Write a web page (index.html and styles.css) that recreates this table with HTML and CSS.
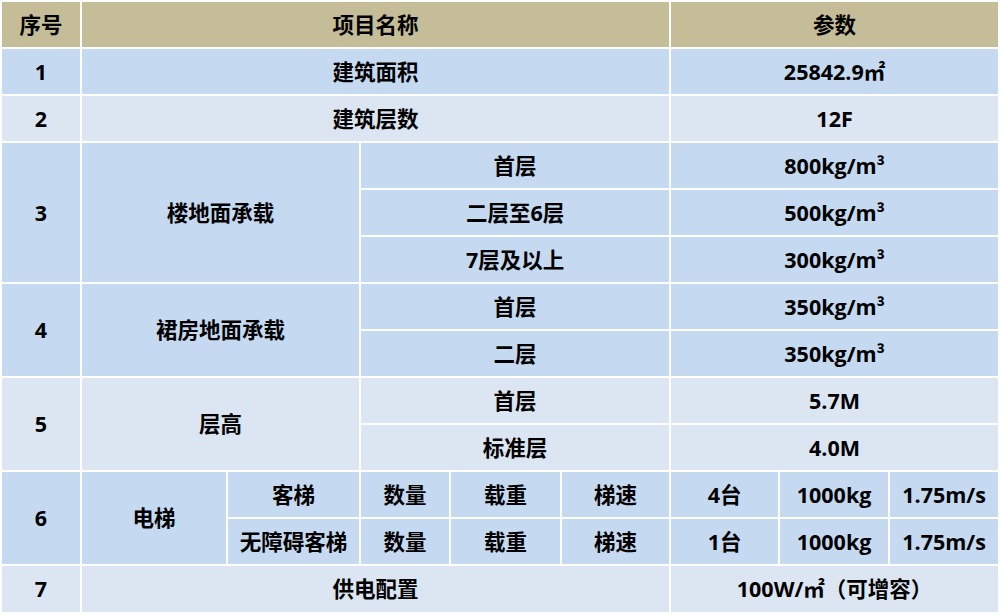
FILE: index.html
```html
<!DOCTYPE html>
<html lang="zh">
<head>
<meta charset="utf-8">
<link rel="stylesheet" href="styles.css">
</head>
<body>
<table class="spec">
  <colgroup>
    <col class="c1"><col class="c2"><col class="c3"><col class="c4"><col class="c5"><col class="c6"><col class="c7"><col class="c8"><col class="c9">
  </colgroup>
  <tr class="head">
    <td>序号</td>
    <td colspan="5">项目名称</td>
    <td colspan="3">参数</td>
  </tr>
  <tr class="blue">
    <td>1</td>
    <td colspan="5">建筑面积</td>
    <td colspan="3">25842.9㎡</td>
  </tr>
  <tr class="light">
    <td>2</td>
    <td colspan="5">建筑层数</td>
    <td colspan="3">12F</td>
  </tr>
  <tr class="blue">
    <td rowspan="3">3</td>
    <td colspan="2" rowspan="3">楼地面承载</td>
    <td colspan="3">首层</td>
    <td colspan="3">800kg/m³</td>
  </tr>
  <tr class="blue">
    <td colspan="3">二层至6层</td>
    <td colspan="3">500kg/m³</td>
  </tr>
  <tr class="blue">
    <td colspan="3">7层及以上</td>
    <td colspan="3">300kg/m³</td>
  </tr>
  <tr class="blue">
    <td rowspan="2">4</td>
    <td colspan="2" rowspan="2">裙房地面承载</td>
    <td colspan="3">首层</td>
    <td colspan="3">350kg/m³</td>
  </tr>
  <tr class="blue">
    <td colspan="3">二层</td>
    <td colspan="3">350kg/m³</td>
  </tr>
  <tr class="light">
    <td rowspan="2">5</td>
    <td colspan="2" rowspan="2">层高</td>
    <td colspan="3">首层</td>
    <td colspan="3">5.7M</td>
  </tr>
  <tr class="light">
    <td colspan="3">标准层</td>
    <td colspan="3">4.0M</td>
  </tr>
  <tr class="blue">
    <td rowspan="2">6</td>
    <td rowspan="2">电梯</td>
    <td>客梯</td>
    <td>数量</td>
    <td>载重</td>
    <td>梯速</td>
    <td>4台</td>
    <td>1000kg</td>
    <td>1.75m/s</td>
  </tr>
  <tr class="blue">
    <td>无障碍客梯</td>
    <td>数量</td>
    <td>载重</td>
    <td>梯速</td>
    <td>1台</td>
    <td>1000kg</td>
    <td>1.75m/s</td>
  </tr>
  <tr class="light last">
    <td>7</td>
    <td colspan="5">供电配置</td>
    <td colspan="3">100W/㎡（可增容）</td>
  </tr>
</table>
</body>
</html>
```

FILE: styles.css
```css
html, body {
  margin: 0;
  padding: 0;
  background: #ffffff;
}

.spec {
  width: 1000px;
  table-layout: fixed;
  border-collapse: separate;
  border-spacing: 2px;
  background: #ffffff;
  font-family: "Open Sans", "Noto Sans CJK SC", sans-serif;
  font-weight: 700;
  font-size: 21.5px;
  color: #000000;
}

.c1 { width: 78px; }
.c2 { width: 144px; }
.c3 { width: 131px; }
.c4 { width: 88px; }
.c5 { width: 109px; }
.c6 { width: 107px; }
.c7 { width: 107px; }
.c8 { width: 108px; }
.c9 { width: 108px; }

.spec tr {
  height: 45px;
}

.spec tr.last {
  height: 46px;
}

.spec td {
  padding: 0;
  text-align: center;
  vertical-align: middle;
  white-space: nowrap;
  line-height: 1;
}

.head td {
  background: #c4bd97;
}

.blue td {
  background: #c5d9f1;
}

.light td {
  background: #dce6f2;
}
```
